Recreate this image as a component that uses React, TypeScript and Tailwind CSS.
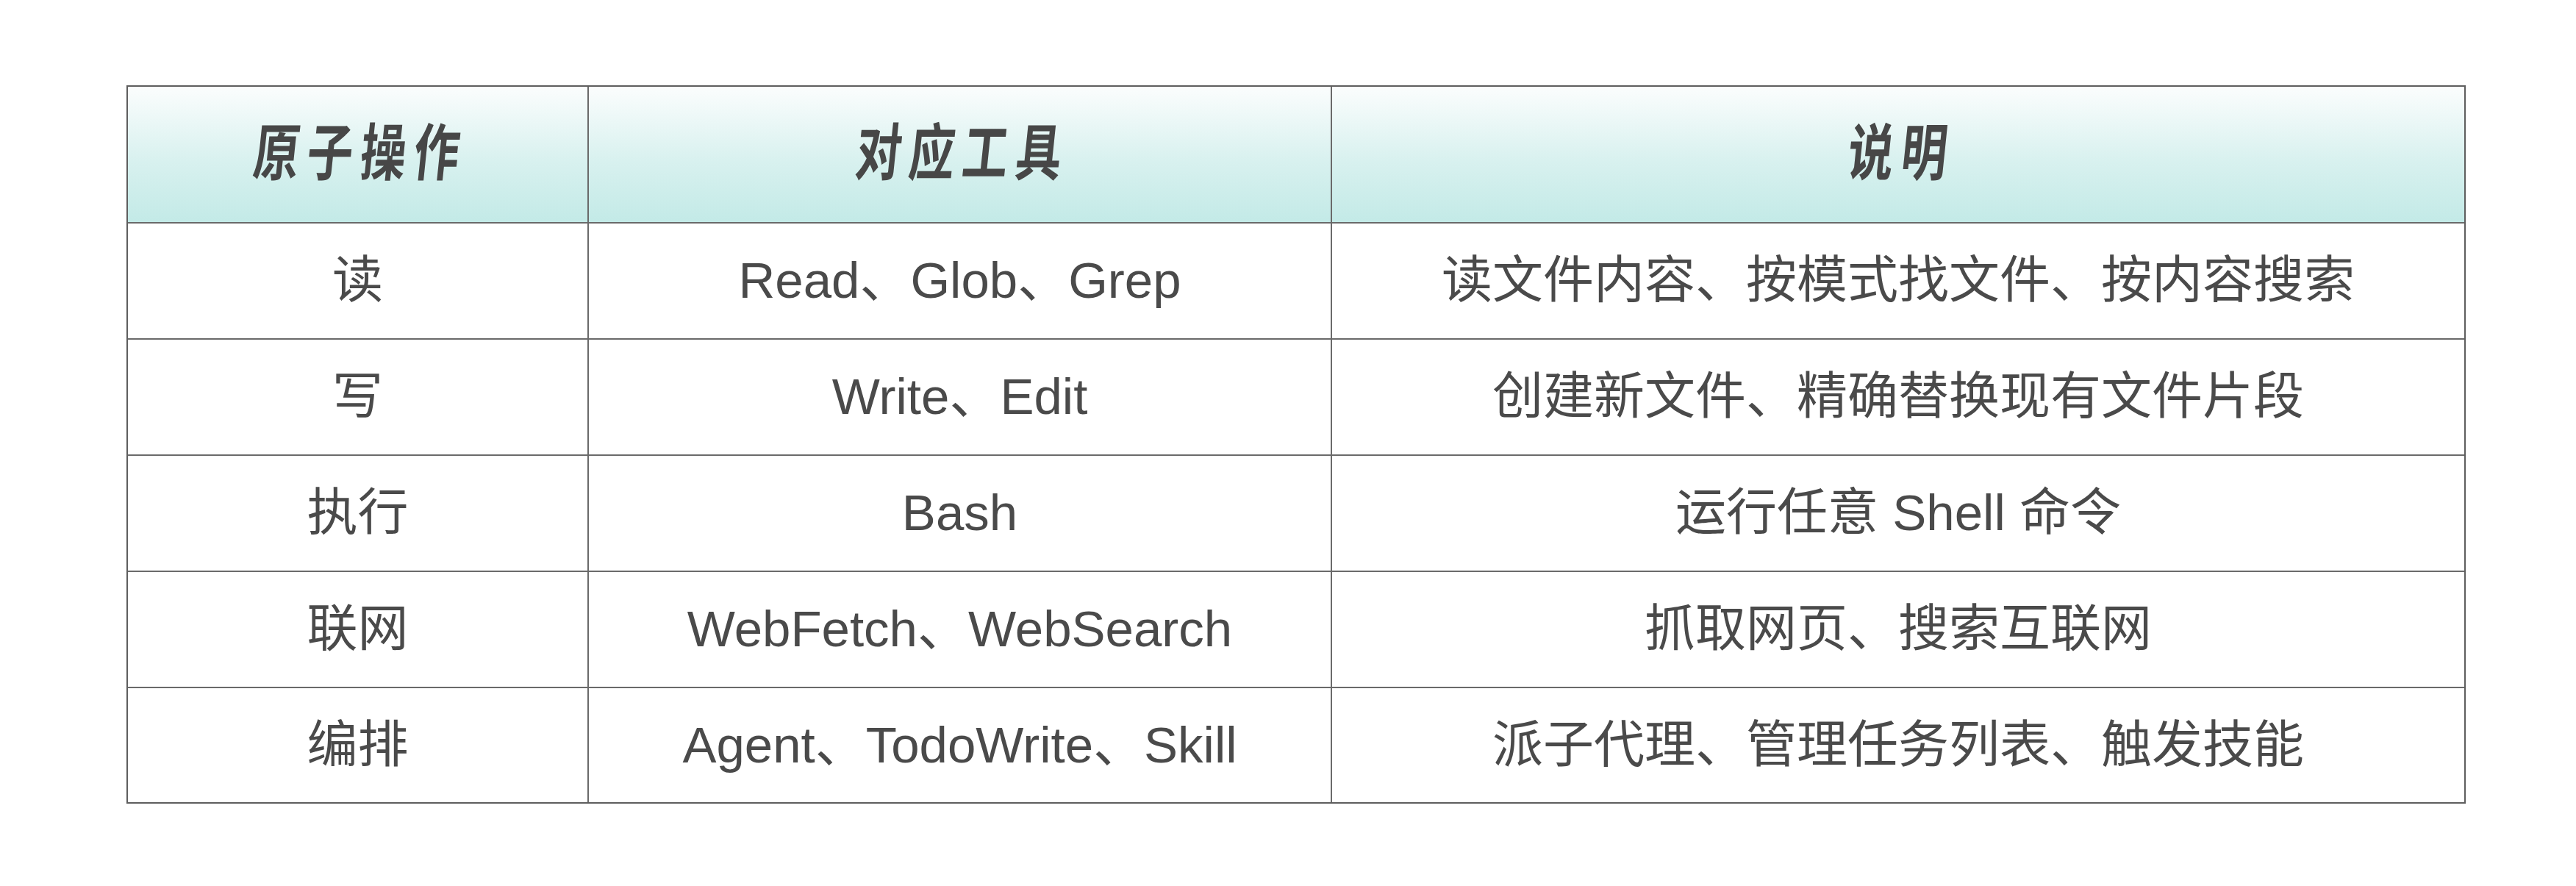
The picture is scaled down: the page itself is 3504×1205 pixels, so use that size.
import React from "react";

const rows: [string, string, string][] = [
  ["读", "Read、Glob、Grep", "读文件内容、按模式找文件、按内容搜索"],
  ["写", "Write、Edit", "创建新文件、精确替换现有文件片段"],
  ["执行", "Bash", "运行任意 Shell 命令"],
  ["联网", "WebFetch、WebSearch", "抓取网页、搜索互联网"],
  ["编排", "Agent、TodoWrite、Skill", "派子代理、管理任务列表、触发技能"],
];

const bodyFont = {
  fontFamily: '"Liberation Sans", "Noto Sans CJK SC", sans-serif',
};

function HeadText({ children }: { children: string }) {
  return (
    <span
      className="inline-block font-semibold text-[84px] leading-none tracking-[14px] text-[#474747] [transform:scaleX(0.74)_skewX(-8deg)] -mt-[16px] pl-[14px]"
      style={{ fontFamily: '"Noto Sans CJK SC", sans-serif' }}
    >
      {children}
    </span>
  );
}

export default function App() {
  return (
    <div className="w-[3504px] h-[1205px] bg-white pt-[116px] pl-[172px]">
      <div className="w-[3182px] border-2 border-[#5e5e5e] flex flex-col">
        <div className="flex h-[186px] border-b-2 border-[#6a6a6a] bg-gradient-to-b from-[#fbfdfd] via-[#d8f1ef] via-55% to-[#c3eae7]">
          <div className="w-[627px] shrink-0 border-r-2 border-[#6a6a6a] flex items-center justify-center">
            <HeadText>原子操作</HeadText>
          </div>
          <div className="w-[1011px] shrink-0 border-r-2 border-[#6a6a6a] flex items-center justify-center">
            <HeadText>对应工具</HeadText>
          </div>
          <div className="flex-1 flex items-center justify-center">
            <HeadText>说明</HeadText>
          </div>
        </div>
        {rows.map((r, i) => (
          <div
            key={i}
            className={
              i < rows.length - 1
                ? "flex h-[158px] border-b-2 border-[#6a6a6a]"
                : "flex h-[155px]"
            }
          >
            <div
              className="w-[627px] shrink-0 border-r-2 border-[#6a6a6a] flex items-center justify-center text-[69px] text-[#4a4a4a]"
              style={bodyFont}
            >
              {r[0]}
            </div>
            <div
              className="w-[1011px] shrink-0 border-r-2 border-[#6a6a6a] flex items-center justify-center text-[69px] text-[#4a4a4a]"
              style={bodyFont}
            >
              {r[1]}
            </div>
            <div
              className="flex-1 flex items-center justify-center text-[69px] text-[#4a4a4a]"
              style={bodyFont}
            >
              {r[2]}
            </div>
          </div>
        ))}
      </div>
    </div>
  );
}
